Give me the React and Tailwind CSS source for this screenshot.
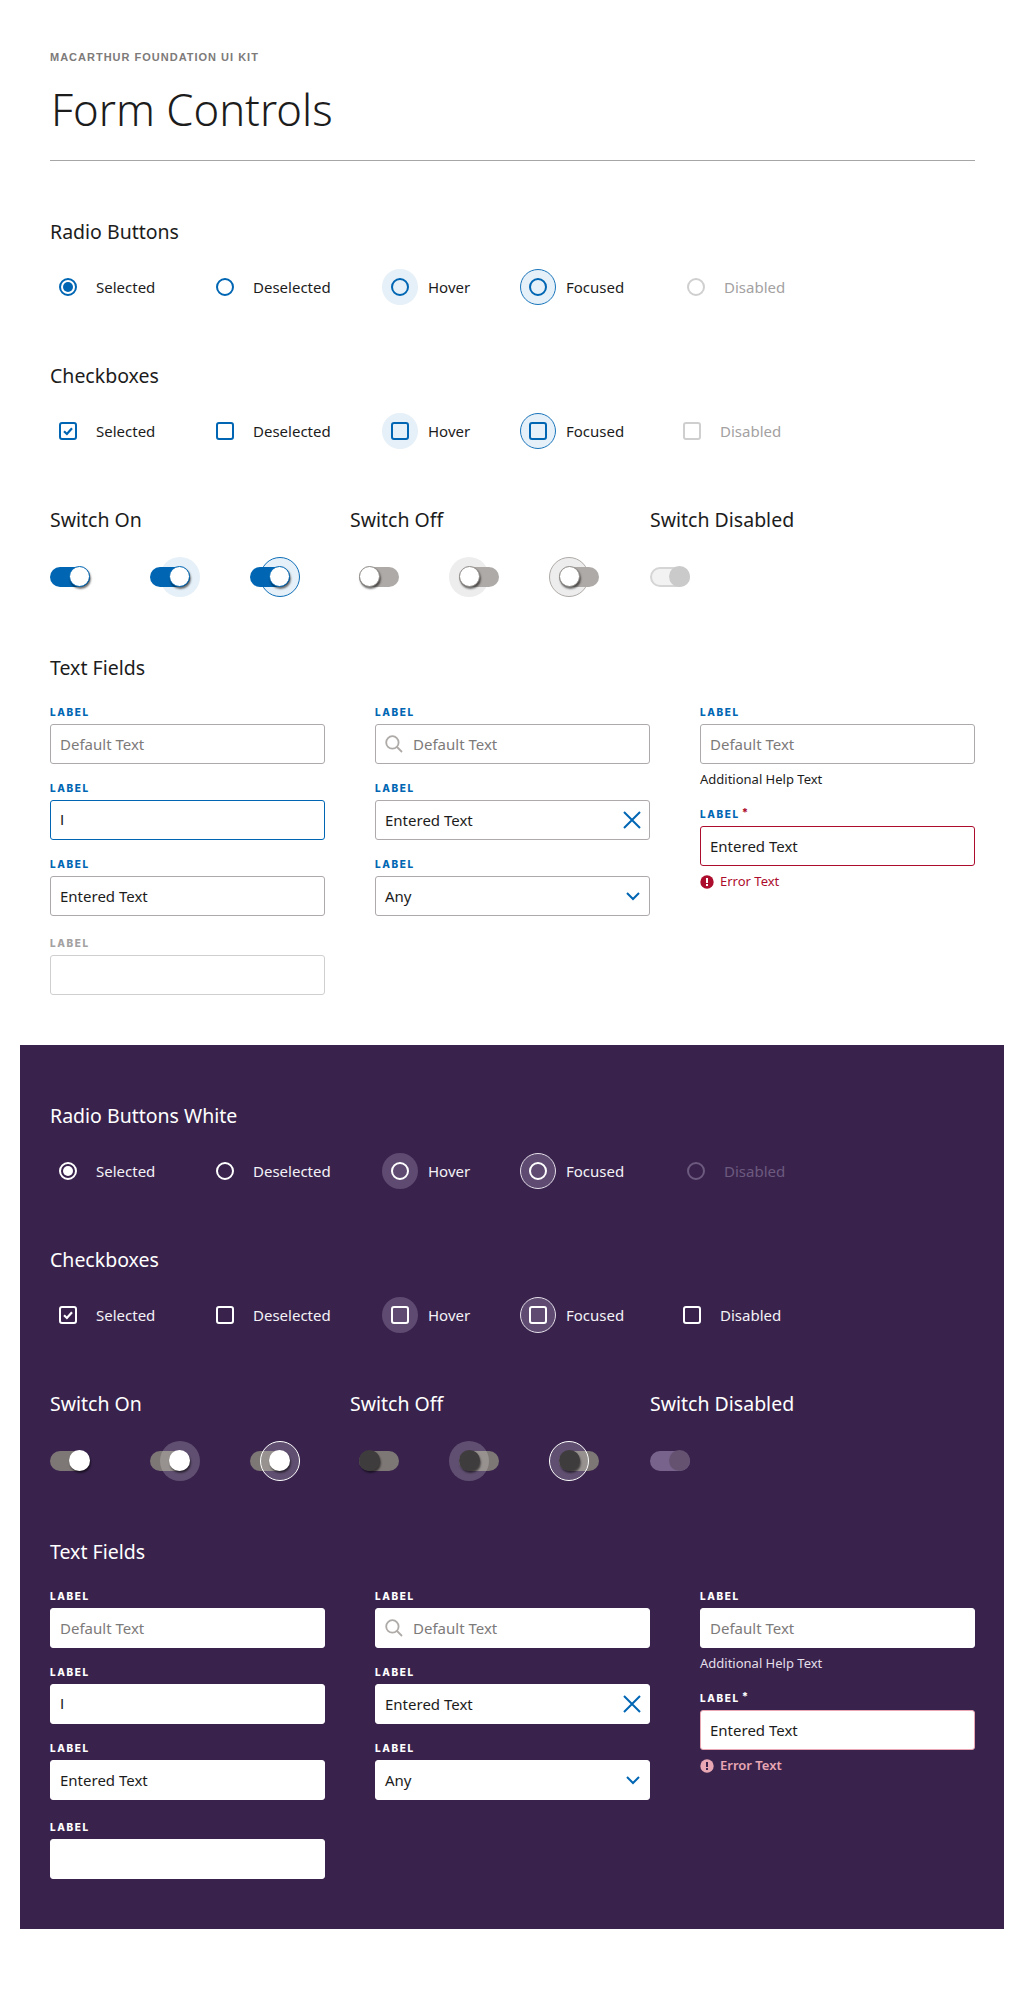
import React from "react";

const FONT = "font-['Noto_Sans',sans-serif]";

function Indicator({ shape, state, dark }) {
  const selected = state === "selected";
  const hover = state === "hover";
  const focus = state === "focus";
  const disabled = state === "disabled";
  const halo = hover || focus;
  const haloBg = dark ? "bg-[#5f4b72]" : "bg-[#e5f0f8]";
  const haloRing = focus ? (dark ? "border border-[#e3dde8]" : "border border-[#1a75bb]") : "";
  let color;
  if (disabled) {
    if (dark) color = shape === "radio" ? "border-[#6d5a7f]" : "border-white";
    else color = "border-[#cfcfcf]";
  } else color = dark ? "border-white" : "border-[#0066b3]";
  const fg = dark ? "text-white" : "text-[#0066b3]";
  return (
    <span className="relative flex h-9 w-9 shrink-0 items-center justify-center">
      {halo && <span className={`absolute inset-0 rounded-full ${haloBg} ${haloRing}`} />}
      {shape === "radio" ? (
        <span className={`relative flex h-[18px] w-[18px] items-center justify-center rounded-full border-2 ${color}`}>
          {selected && <span className={`h-2.5 w-2.5 rounded-full ${dark ? "bg-white" : "bg-[#0066b3]"}`} />}
        </span>
      ) : (
        <span className={`relative flex h-[18px] w-[18px] items-center justify-center rounded-[3px] border-2 ${color}`}>
          {selected && (
            <svg viewBox="0 0 12 12" className={`h-3 w-3 ${fg}`} fill="none" stroke="currentColor" strokeWidth="2.2">
              <path d="M2 6.2 L4.9 9 L10 3.2" />
            </svg>
          )}
        </span>
      )}
    </span>
  );
}

function OptionRow({ shape, dark }) {
  const text = dark ? "text-[#f4f2f6]" : "text-[#1c1c1c]";
  const dis = shape === "radio"
    ? (dark ? "text-[#6d5a7f]" : "text-[#a3a1a1]")
    : (dark ? "text-[#f4f2f6]" : "text-[#a3a1a1]");
  const items = [
    ["selected", "Selected", "w-[157px]"],
    ["default", "Deselected", "w-[175px]"],
    ["hover", "Hover", "w-[138px]"],
    ["focus", "Focused", shape === "radio" ? "w-[158px]" : "w-[154px]"],
    ["disabled", "Disabled", ""],
  ];
  return (
    <div className="flex h-9 items-center">
      {items.map(([s, l, w]) => (
        <div key={s} className={`flex items-center gap-2.5 ${w}`}>
          <Indicator shape={shape} state={s} dark={dark} />
          <span className={`text-[15px] leading-5 ${s === "disabled" ? dis : text}`}>{l}</span>
        </div>
      ))}
    </div>
  );
}

function Switch({ on, state, dark, disabled }) {
  let track, thumb;
  if (disabled) {
    track = dark ? "bg-[#77638c]" : "bg-[#f2f2f2] border-2 border-[#d5d5d5]";
    thumb = dark ? "bg-[#655270]" : "bg-[#cacaca]";
  } else if (on) {
    track = dark ? "bg-[#7d7775]" : "bg-[#0066b3]";
    thumb = dark ? "bg-white" : "bg-white border border-[#0066b3]";
  } else {
    track = dark ? "bg-[#7d7775]" : "bg-[#aeaaa7]";
    thumb = dark ? "bg-[#3f3c3e]" : "bg-white border border-[#8e8a88]";
  }
  const blue = !dark && on;
  const haloBg = dark ? "bg-white/20" : blue ? "bg-[#e5f0f8]" : "bg-[#eeedee]";
  const ring = state === "focus" ? (dark ? "border border-white" : blue ? "border border-[#0f6fb8]" : "border border-[#aeaaa7]") : "";
  const halo = state ? (
    <span className={`absolute top-1/2 h-10 w-10 -translate-y-1/2 rounded-full ${on ? "left-[10px]" : "left-[-10px]"} ${haloBg} ${ring}`} />
  ) : null;
  return (
    <div className="relative h-[21px] w-10">
      {!dark && halo}
      <span className={`absolute inset-x-0 top-[0.5px] h-5 rounded-full ${track}`} />
      {dark && halo}
      <span
        className={`absolute top-0 h-[21px] w-[21px] rounded-full ${on ? "right-0" : "left-0"} ${thumb} ${disabled ? "" : "shadow-[1px_2px_2px_rgba(0,0,0,0.55)]"}`}
      />
    </div>
  );
}

function SwitchColumn({ title, on, dark, disabled, offset = "" }) {
  return (
    <div className="w-[300px]">
      <Heading dark={dark}>{title}</Heading>
      <div className={`mt-[34px] flex h-[21px] items-center ${offset}`}>
        {(disabled ? [null] : [null, "hover", "focus"]).map((s, i) => (
          <div key={i} className="w-[100px] shrink-0">
            <Switch on={on} state={s} dark={dark} disabled={disabled} />
          </div>
        ))}
      </div>
    </div>
  );
}

function Heading({ children, dark }) {
  return <h2 className={`h-6 text-[19.5px] leading-6 ${dark ? "text-white" : "text-[#1c1c1c]"}`}>{children}</h2>;
}

function Label({ children, dark, disabled, required }) {
  const c = dark ? "text-white" : disabled ? "text-[#a3a1a1]" : "text-[#0066b3]";
  return (
    <div className={`flex h-3 items-center font-['Inter',sans-serif] text-[10px] font-extrabold tracking-[1.6px] ${c}`}>
      {children}
      {required && <span className={`ml-0.5 -translate-y-0.5 text-[11px] ${dark ? "text-white" : "text-[#ad0d2d]"}`}>*</span>}
    </div>
  );
}

function Field({ label, value, placeholder, dark, state, icon, help, error, required, className = "" }) {
  let border;
  if (dark) border = state === "error" ? "border-[#e9a7b4]" : "border-white";
  else if (state === "focus") border = "border-[#0066b3]";
  else if (state === "error") border = "border-[#ad0d2d]";
  else if (state === "disabled") border = "border-[#cfcfcf]";
  else border = "border-[#aeaaab]";
  return (
    <div className={`w-[275px] ${className}`}>
      <Label dark={dark} disabled={state === "disabled"} required={required}>{label}</Label>
      <div className={`mt-1.5 flex h-10 items-center rounded-[3px] border bg-white pl-[9px] pr-2 text-[15px] ${border}`}>
        {icon === "search" && (
          <svg viewBox="0 0 18 18" className="mr-[10px] h-[18px] w-[18px] shrink-0 text-[#aeaaa7]" fill="none" stroke="currentColor" strokeWidth="1.8">
            <circle cx="7.4" cy="7.4" r="6.2" />
            <path d="M12 12 L17 17" />
          </svg>
        )}
        <span className={`grow ${placeholder ? "text-[#7d7a7a]" : "text-[#1c1c1c]"} ${value === "I" ? "font-['Liberation_Sans',sans-serif]" : ""}`}>
          {placeholder || value}
        </span>
        {icon === "clear" && (
          <svg viewBox="0 0 18 18" className="h-[18px] w-[18px] shrink-0 text-[#0066b3]" fill="none" stroke="currentColor" strokeWidth="2">
            <path d="M1 1 L17 17 M17 1 L1 17" />
          </svg>
        )}
        {icon === "chevron" && (
          <svg viewBox="0 0 14 9" className="mr-px h-[9px] w-[14px] shrink-0 text-[#0066b3]" fill="none" stroke="currentColor" strokeWidth="2">
            <path d="M1 1 L7 7 L13 1" />
          </svg>
        )}
      </div>
      {help && <p className={`mt-1.5 h-[18px] text-[13px] leading-[18px] ${dark ? "text-[#e4dfe9]" : "text-[#1c1c1c]"}`}>{help}</p>}
      {error && (
        <div className={`mt-[9px] flex h-[14px] items-center gap-1.5 text-[13px] ${dark ? "font-semibold text-[#e9a7b4]" : "text-[#ad0d2d]"}`}>
          <svg viewBox="0 0 14 14" className="h-3.5 w-3.5 shrink-0">
            <circle cx="7" cy="7" r="6.7" fill="currentColor" />
            <rect x="6" y="3" width="2" height="5" fill={dark ? "#39234d" : "#fff"} />
            <rect x="6" y="9" width="2" height="2" fill={dark ? "#39234d" : "#fff"} />
          </svg>
          {error}
        </div>
      )}
    </div>
  );
}

function Controls({ dark, radioTitle }) {
  return (
    <>
      <Heading dark={dark}>{radioTitle}</Heading>
      <div className="mt-[25px]"><OptionRow shape="radio" dark={dark} /></div>
      <div className="mt-[59px]"><Heading dark={dark}>Checkboxes</Heading></div>
      <div className="mt-[25px]"><OptionRow shape="check" dark={dark} /></div>
      <div className="mt-[59px] flex">
        <SwitchColumn title="Switch On" on dark={dark} />
        <SwitchColumn title="Switch Off" dark={dark} offset="pl-[9px]" />
        <SwitchColumn title="Switch Disabled" on dark={dark} disabled />
      </div>
      <div className="mt-[69px]"><Heading dark={dark}>Text Fields</Heading></div>
      <div className="mt-[26px] flex gap-[50px]">
        <div className="flex flex-col">
          <Field label="LABEL" placeholder="Default Text" dark={dark} />
          <Field label="LABEL" value="I" state="focus" dark={dark} className="mt-[18px]" />
          <Field label="LABEL" value="Entered Text" dark={dark} className="mt-[18px]" />
          <Field label="LABEL" state="disabled" dark={dark} className="mt-[21px]" />
        </div>
        <div className="flex flex-col">
          <Field label="LABEL" placeholder="Default Text" icon="search" dark={dark} />
          <Field label="LABEL" value="Entered Text" icon="clear" dark={dark} className="mt-[18px]" />
          <Field label="LABEL" value="Any" icon="chevron" dark={dark} className="mt-[18px]" />
        </div>
        <div className="flex flex-col">
          <Field label="LABEL" placeholder="Default Text" help="Additional Help Text" dark={dark} />
          <Field label="LABEL" value="Entered Text" required state="error" error="Error Text" dark={dark} className="mt-[20px]" />
        </div>
      </div>
    </>
  );
}

export default function App() {
  return (
    <div className={`min-h-[2000px] w-[1024px] bg-white ${FONT}`}>
      <div className="px-[50px] pt-[51px]">
        <div className="font-['Liberation_Sans',sans-serif] text-[11px] font-bold leading-3 tracking-[1px] text-[#7d7a7a]">
          MACARTHUR FOUNDATION UI KIT
        </div>
        <h1 className="mt-[16px] pl-px text-[43.6px] font-light leading-[60px] text-[#1c1c1c]">Form Controls</h1>
        <div className="mt-[21px] h-px w-[925px] bg-[#a8a5a5]" />
        <div className="mt-[59px]">
          <Controls radioTitle="Radio Buttons" />
        </div>
      </div>
      <div className="mx-[20px] mt-[50px] w-[984px] bg-[#39234d] px-[30px] pb-[50px] pt-[59px]">
        <Controls dark radioTitle="Radio Buttons White" />
      </div>
    </div>
  );
}
